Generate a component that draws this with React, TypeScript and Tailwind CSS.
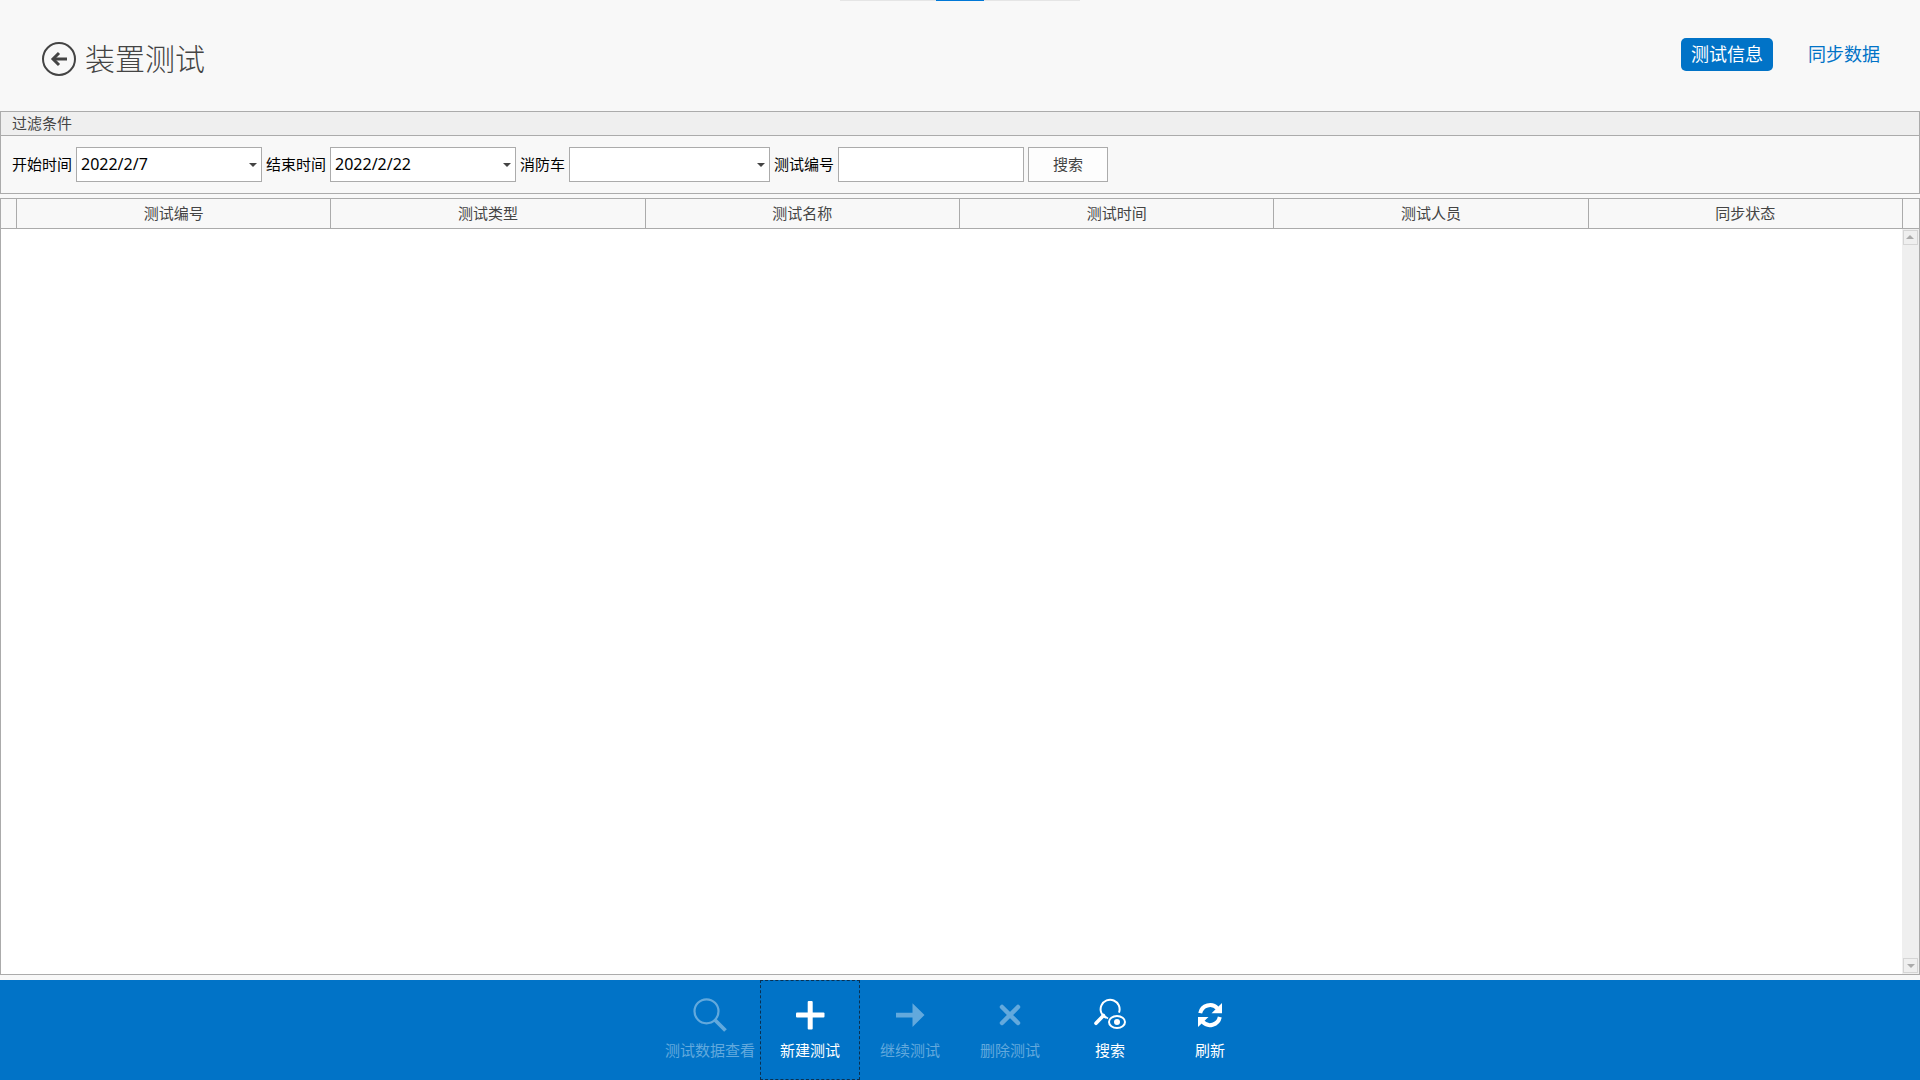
import React, { useState } from 'react';
import clsx from 'clsx';

const columns = ['测试编号', '测试类型', '测试名称', '测试时间', '测试人员', '同步状态'];

const BackIcon = () => (
  <svg width="36" height="36" viewBox="0 0 36 36" fill="none" stroke="currentColor">
    <circle cx="18" cy="18" r="16" strokeWidth="2" />
    <path d="M26 18H12" strokeWidth="3" />
    <path d="M18 12L12 18L18 24" strokeWidth="3" />
  </svg>
);

const Caret = () => (
  <svg width="8" height="4" viewBox="0 0 8 4" fill="currentColor">
    <path d="M0 0H8L4 4Z" />
  </svg>
);

const SearchIcon = () => (
  <svg width="36" height="36" viewBox="0 0 36 36" fill="none" stroke="currentColor">
    <circle cx="14.5" cy="14.3" r="12" strokeWidth="2.2" />
    <path d="M23 23L33.5 33.5" strokeWidth="3.8" />
  </svg>
);

const PlusIcon = () => (
  <svg width="36" height="36" viewBox="0 0 36 36" fill="currentColor">
    <rect x="4" y="15.5" width="28.5" height="5" rx="1" />
    <rect x="15.7" y="4" width="5" height="28.5" rx="1" />
  </svg>
);

const ArrowIcon = () => (
  <svg width="36" height="36" viewBox="0 0 36 36" fill="currentColor">
    <path d="M4 15.7H20.5V6.3L32.5 18L20.5 29.9V20.5H4Z" />
  </svg>
);

const CrossIcon = () => (
  <svg width="36" height="36" viewBox="0 0 36 36" fill="none" stroke="currentColor">
    <path d="M10 10L26 26M26 10L10 26" strokeWidth="4.5" strokeLinecap="round" />
  </svg>
);

const SearchEyeIcon = () => (
  <svg width="36" height="36" viewBox="0 0 36 36" fill="none" stroke="currentColor">
    <path d="M14 20.8A9.5 9.5 0 1 1 27 15.6" strokeWidth="2" />
    <path d="M11.5 18.5L4 26.3" strokeWidth="3.6" strokeLinecap="round" />
    <path d="M10.5 18L16 21.5" strokeWidth="1.6" />
    <ellipse cx="25" cy="25" rx="8" ry="6" strokeWidth="2" />
    <circle cx="25" cy="25" r="3" fill="currentColor" stroke="none" />
  </svg>
);

const RefreshIcon = () => (
  <svg width="36" height="36" viewBox="0 0 36 36" fill="none" stroke="currentColor">
    <path d="M8.2 16.2A10 10 0 0 1 25.5 11.5" strokeWidth="4" />
    <path d="M30 6V16.3H19.5Z" fill="currentColor" stroke="none" />
    <path d="M27.8 20A10 10 0 0 1 10.5 24.7" strokeWidth="4" />
    <path d="M6 30V19.9H16.5Z" fill="currentColor" stroke="none" />
  </svg>
);

const actions = [
  { label: '测试数据查看', icon: SearchIcon, disabled: true },
  { label: '新建测试', icon: PlusIcon, focused: true },
  { label: '继续测试', icon: ArrowIcon, disabled: true },
  { label: '删除测试', icon: CrossIcon, disabled: true },
  { label: '搜索', icon: SearchEyeIcon },
  { label: '刷新', icon: RefreshIcon },
];

interface DateFieldProps {
  id: string;
  label: string;
  value: string;
  onChange: (value: string) => void;
}

const DateField: React.FC<DateFieldProps> = ({ id, label, value, onChange }) => (
  <div className="flex items-center gap-1">
    <label htmlFor={id} className="pb-0.5">{label}</label>
    <div className="flex h-[35px] w-[186px] items-center border border-[#ababab] bg-white">
      <input
        id={id}
        type="text"
        value={value}
        onChange={(e) => onChange(e.target.value)}
        className="min-w-0 flex-1 pb-0.5 pl-1 text-base leading-5 outline-none"
      />
      <button type="button" aria-label={label} className="px-1 text-[#444444]">
        <Caret />
      </button>
    </div>
  </div>
);

export default function App() {
  const [tab, setTab] = useState('测试信息');
  const [start, setStart] = useState('2022/2/7');
  const [end, setEnd] = useState('2022/2/22');
  const [testNo, setTestNo] = useState('');

  return (
    <div className="flex min-h-screen flex-col bg-[#f8f8f8] font-['Noto_Sans','Noto_Sans_CJK_SC',sans-serif] text-[15px] leading-5 text-[#444444]">
      {/* Pull-down handle */}
      <div className="flex h-px w-60 justify-center self-center bg-[#e5e5e5]">
        <div className="w-12 bg-[#0078d7]" />
      </div>

      <header className="flex h-[110px] items-center justify-between pr-[30px] pb-1 pl-[41px]">
        <div className="flex items-center gap-2 pt-2.5">
          <button type="button" aria-label="返回">
            <BackIcon />
          </button>
          <h1 className="text-[30px] leading-9 font-light">装置测试</h1>
        </div>
        <nav className="flex gap-[25px]">
          {['测试信息', '同步数据'].map((name) => (
            <a
              key={name}
              href="#"
              onClick={() => setTab(name)}
              className={clsx(
                'rounded-[5px] px-[10px] text-lg leading-[33px]',
                tab === name ? 'bg-[#0173c7] text-white' : 'text-[#0173c7]'
              )}
            >
              {name}
            </a>
          ))}
        </nav>
      </header>

      {/* Filters */}
      <section className="border border-[#ababab]">
        <h2 className="border-b border-[#ababab] bg-[#efefef] px-[11px] leading-[23px]">过滤条件</h2>
        <form className="flex flex-wrap items-center gap-1 px-[11px] py-[11px] text-black" onSubmit={(e) => e.preventDefault()}>
          <DateField id="start" label="开始时间" value={start} onChange={setStart} />
          <DateField id="end" label="结束时间" value={end} onChange={setEnd} />
          <label htmlFor="truck" className="pb-0.5">消防车</label>
          <div className="relative">
            <select id="truck" className="block h-[35px] w-[201px] appearance-none border border-[#ababab] bg-white px-1 outline-none">
              <option value=""></option>
            </select>
            <span className="pointer-events-none absolute inset-y-0 right-[5px] flex items-center text-[#444444]">
              <Caret />
            </span>
          </div>
          <label htmlFor="testNo" className="pb-0.5">测试编号</label>
          <input
            id="testNo"
            type="text"
            value={testNo}
            onChange={(e) => setTestNo(e.target.value)}
            className="h-[35px] w-[186px] border border-[#ababab] bg-white px-1 outline-none"
          />
          <button type="submit" className="h-[35px] w-20 border border-[#ababab] bg-[#fdfdfd] pb-0.5 text-[#444444]">
            搜索
          </button>
        </form>
      </section>

      {/* Records */}
      <section className="mt-1 mb-[5px] flex flex-1 flex-col border border-[#ababab] bg-white">
        <table className="w-full table-fixed border-separate border-spacing-0 bg-[#f8f8f8]">
          <thead>
            <tr>
              <th className="w-4 border-r border-b border-[#ababab]" />
              {columns.map((name) => (
                <th key={name} scope="col" className="h-[30px] border-r border-b border-[#ababab] p-0 pb-0.5 font-normal">
                  {name}
                </th>
              ))}
              <th className="w-4 border-b border-[#ababab]" />
            </tr>
          </thead>
        </table>
        <div className="flex flex-1 justify-end">
          <div className="flex w-[17px] flex-col items-center justify-between bg-[#efefef] py-px text-[#ababab]">
            <button type="button" aria-label="向上滚动" className="flex size-[15px] rotate-180 items-center justify-center border border-[#d5d5d5]">
              <Caret />
            </button>
            <button type="button" aria-label="向下滚动" className="flex size-[15px] items-center justify-center border border-[#d5d5d5]">
              <Caret />
            </button>
          </div>
        </div>
      </section>

      {/* Action bar */}
      <footer className="flex h-[100px] justify-center bg-[#0173c7]">
        {actions.map(({ label, icon: Icon, disabled, focused }) => (
          <button
            key={label}
            type="button"
            disabled={disabled}
            className={clsx(
              'flex w-[100px] flex-col items-center gap-[7px] border pt-4 whitespace-nowrap',
              focused ? 'border-dashed border-[#0a3050]' : 'border-transparent',
              disabled ? 'text-[#62a9dd]' : 'text-white'
            )}
          >
            <Icon />
            <span>{label}</span>
          </button>
        ))}
      </footer>
    </div>
  );
}
